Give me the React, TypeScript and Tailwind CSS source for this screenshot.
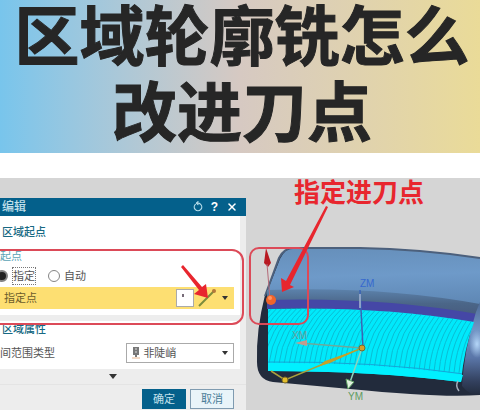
import React, { useState } from 'react';
import { RotateCcw, X } from 'lucide-react';

const toolpaths = Array.from({ length: 44 }, (_, i) => 244 + i * 5);

const Scene = () => (
  <svg
    className="absolute inset-0 w-full"
    viewBox="0 178 480 232"
    fontFamily="'Liberation Sans', sans-serif"
    aria-hidden="true"
  >
    <defs>
      <linearGradient id="hood" x1="0" y1="0" x2="0.1" y2="1">
        <stop offset="0" stopColor="#668fba" />
        <stop offset="0.5" stopColor="#6e9ac9" />
        <stop offset="1" stopColor="#5f88b5" />
      </linearGradient>
      <linearGradient id="shade" x1="0" y1="0" x2="0" y2="1">
        <stop offset="0" stopColor="#5c82ab" />
        <stop offset="0.5" stopColor="#4b6688" />
        <stop offset="1" stopColor="#465a7c" />
      </linearGradient>
      <linearGradient id="side" x1="0" y1="0" x2="0" y2="1">
        <stop offset="0" stopColor="#4d6a96" />
        <stop offset="0.3" stopColor="#7396c6" />
        <stop offset="0.6" stopColor="#5a76a8" />
        <stop offset="0.85" stopColor="#33415f" />
        <stop offset="1" stopColor="#222b3c" />
      </linearGradient>
      <radialGradient id="glint">
        <stop offset="0" stopColor="#b4d6f8" />
        <stop offset="1" stopColor="#b4d6f8" stopOpacity="0" />
      </radialGradient>
      <clipPath id="surface">
        <path d="M268 309Q380 306 474 322Q464 350 461 382Q375 371 268 371Z" />
      </clipPath>
    </defs>

    {/* Body */}
    <path
      d="M265 295L279 258Q284 248 293 248H360Q420 249 480 258V395Q440 398 350 389L273 382Q257 380 257 362Q256 330 265 295Z"
      fill="#222b3c"
    />
    <path d="M267 292L280 259Q285 248 295 248H360Q420 249 480 258V308Q380 288 267 292Z" fill="url(#hood)" />
    <path d="M265 296L279 258Q284 248 293 248H360Q420 249 480 258" fill="none" stroke="#4c607c" strokeWidth="2" />
    <path d="M267 290Q380 286 480 304V318Q380 299 267 302Z" fill="url(#shade)" />
    <path d="M267 300Q380 297 477 314L474 324Q380 306 267 309Z" fill="#4547a6" />
    <path d="M476 312L480 302V395Q470 396 462 386Q464 350 476 312Z" fill="url(#side)" />
    <ellipse cx="477" cy="344" rx="8" ry="14" fill="url(#glint)" />

    {/* Machined surface */}
    <path d="M268 309Q380 306 474 322Q464 350 461 382Q375 371 268 371Z" fill="#00e9fb" />
    <g clipPath="url(#surface)" fill="none" stroke="#0abdd3" strokeWidth="1">
      {toolpaths.map((x, i) => (
        <path key={x} d={`M${x} ${362 + i / 4}Q${x + 4} 330 ${x + 32} 304`} />
      ))}
      <path d="M268 362Q375 361 464 374" stroke="#15a6d8" />
    </g>
    <path d="M268 363Q375 362 463 375L461 382Q375 371 268 371Z" fill="#00f0ff" />

    {/* Axes */}
    <path d="M360 290L363 348" stroke="#3b64b4" strokeWidth="1.5" />
    <path d="M360 294V308" stroke="#a9b7cf" strokeWidth="1.5" />
    <path d="M300 343L362 348" stroke="#6fa99a" strokeWidth="1.5" />
    <path d="M295 343L307 340V346Z" fill="#c39a8d" />
    <path d="M362 348L349 385" stroke="#8ed3bb" strokeWidth="1.5" />
    <path d="M348 389L346 379L354 382Z" fill="#e0f0df" stroke="#5e9f62" />
    <path d="M271 371L285 380L362 348" fill="none" stroke="#a9a03c" strokeWidth="1.5" />
    <path d="M317 367L325 361L362 348L330 363Z" fill="#c5a128" />
    <circle cx="285" cy="380" r="3" fill="#e2bd2e" stroke="#7c6b25" />
    <circle cx="362" cy="348" r="3" fill="#d3a02c" stroke="#756b32" />
    <path d="M459 391Q455 386 458 381" fill="none" stroke="#a3adbb" strokeWidth="1.5" />
    <text x="360" y="287" fontSize="10" fill="#3568cf">ZM</text>
    <text x="292" y="339" fontSize="10" fill="#6c9d9a">XM</text>
    <text x="348" y="400" fontSize="10" fill="#5f9c61">YM</text>

    {/* Start point */}
    <path d="M266 248L271 263L268 267L264 263Z" fill="#b81922" />
    <path d="M267 264L270 299" stroke="#b46a78" />
    <circle cx="271" cy="300" r="5" fill="#ef642b" />
    <circle cx="270" cy="298" r="2" fill="#ff9460" />
  </svg>
);

const Annotations = () => (
  <svg
    className="pointer-events-none absolute inset-0 w-full overflow-visible"
    viewBox="0 178 480 232"
    fontFamily="'Noto Sans CJK SC', sans-serif"
  >
    <g fill="none" stroke="#dc4a58" strokeWidth="2">
      <rect x="-20" y="250" width="263" height="74" rx="11" />
      <rect x="250" y="248" width="58" height="76" rx="9" />
    </g>
    <g fill="#e8262e">
      <path d="M181 267L183 265L202 287L206 284L208 298L194 294L199 290Z" />
      <path d="M326 206L328 207L290 285L294 287L282 292L281 278L286 281Z" />
      <text x="294" y="202" fontSize="26" fontWeight="700">指定进刀点</text>
    </g>
  </svg>
);

const Caret = () => (
  <svg viewBox="0 0 6 4" className="h-1 w-1.5" aria-hidden="true">
    <path d="M0 0H6L3 4Z" fill="#333" />
  </svg>
);

const radioClass =
  'size-3 appearance-none rounded-full border border-[#858585] bg-white checked:border-2 checked:bg-[#222]';

const EditDialog = () => {
  const [mode, setMode] = useState('specify');

  return (
    <form className="relative w-[51.25%] bg-[#ededed] text-[11px] leading-4 text-[#555]">
      <header className="flex h-[18px] items-center justify-between bg-[#04608b] pr-2 pl-0.5 text-white">
        <h2 className="text-[12px] font-medium text-[#c3e0ec]">编辑</h2>
        <div className="flex items-center gap-2">
          <button type="button" aria-label="重置"><RotateCcw size={10} strokeWidth={3} className="rotate-45 text-[#b5dbe8]" /></button>
          <button type="button" className="text-[12px] font-bold" aria-label="帮助">?</button>
          <button type="button" aria-label="关闭"><X size={12} strokeWidth={3} /></button>
        </div>
      </header>

      <div className="mr-1.5 bg-white">
        <h3 className="h-8 pt-2 pl-0.5 font-medium text-[#176983]">区域起点</h3>
        <fieldset>
          <legend className="text-[#5ba3b6]">起点</legend>
          <div className="-ml-1 flex h-[23px] items-center gap-3">
            <label className="flex items-center gap-1">
              <input
                type="radio"
                name="mode"
                className={radioClass}
                checked={mode === 'specify'}
                onChange={() => setMode('specify')}
              />
              <span className="border border-dotted border-[#777]">指定</span>
            </label>
            <label className="flex items-center gap-1">
              <input
                type="radio"
                name="mode"
                className={radioClass}
                checked={mode === 'auto'}
                onChange={() => setMode('auto')}
              />
              自动
            </label>
          </div>
        </fieldset>
        <div className="mr-1.5 flex h-[22px] items-center gap-1 bg-[#fddf72] pr-1.5 pl-1 text-[#6b5c2b]">
          <span className="flex-1">指定点</span>
          <button type="button" className="size-[18px] border border-[#aaa] bg-white" aria-label="点对话框">
            <svg viewBox="0 0 16 16"><path d="M5 4h2v3H5z" fill="#776b78" /></svg>
          </button>
          <button type="button" className="flex items-center gap-1.5" aria-label="点类型">
            <svg viewBox="0 0 18 18" className="size-[18px]">
              <path d="M1 17L16 2" stroke="#7c8c3c" strokeWidth="2" />
              <circle cx="16" cy="2" r="2" fill="#b4783b" />
            </svg>
            <Caret />
          </button>
        </div>
        <div className="mt-1.5 h-1.5 bg-[#ededed]" />
        <h3 className="pl-0.5 font-medium text-[#176983]">区域属性</h3>
        <div className="mr-1.5 flex items-center justify-between pt-1.5 pb-1.5">
          <label htmlFor="range">间范围类型</label>
          <div className="relative w-[46%]">
            <select id="range" className="h-5 w-full appearance-none border border-[#aaa] bg-white pl-4 text-[11px] leading-4">
              <option>非陡峭</option>
            </select>
            <svg viewBox="0 0 8 14" className="absolute top-1 left-1.5 h-3.5 w-2">
              <path d="M1 0H7V8H5V10H3V8H1Z" fill="#777" />
              <path d="M3 2H5M3 5H5" stroke="#ddd" />
              <path d="M0 11H8" stroke="#e7b48c" />
            </svg>
            <span className="absolute top-2 right-1.5 flex"><Caret /></span>
          </div>
        </div>
      </div>

      <button type="button" className="flex h-4 w-full items-center justify-center border-b border-[#e4e4e4] pr-5" aria-label="更多">
        <svg viewBox="0 0 8 5" className="h-[5px] w-2"><path d="M0 0H8L4 5Z" fill="#333" /></svg>
      </button>
      <div className="flex justify-end gap-1 pt-1 pr-3 pb-px">
        <button type="button" className="h-5 w-11 bg-[#04608b] text-[#c3e0ec]">确定</button>
        <button type="button" className="h-5 w-11 border border-[#7f9bb0] bg-[#e9f4f9] text-[#4a7c97]">取消</button>
      </div>
    </form>
  );
};

const App = () => (
  <main className="overflow-x-hidden bg-white font-['Liberation_Sans','Noto_Sans_CJK_SC',sans-serif]">
    <header className="bg-linear-to-r from-[#78c5ec] via-[#d6c9c2] via-50% to-[#eadb98] pb-px pl-1">
      <h1 className="text-center text-[65px] leading-[76px] font-bold text-[#262626] [-webkit-text-stroke:1px_#262626]">
        区域轮廓铣怎么
        <br />
        改进刀点
      </h1>
    </header>
    <section className="relative mt-[25px] bg-[#d5d5d5] pt-5">
      <Scene />
      <EditDialog />
      <Annotations />
    </section>
  </main>
);

export default App;
